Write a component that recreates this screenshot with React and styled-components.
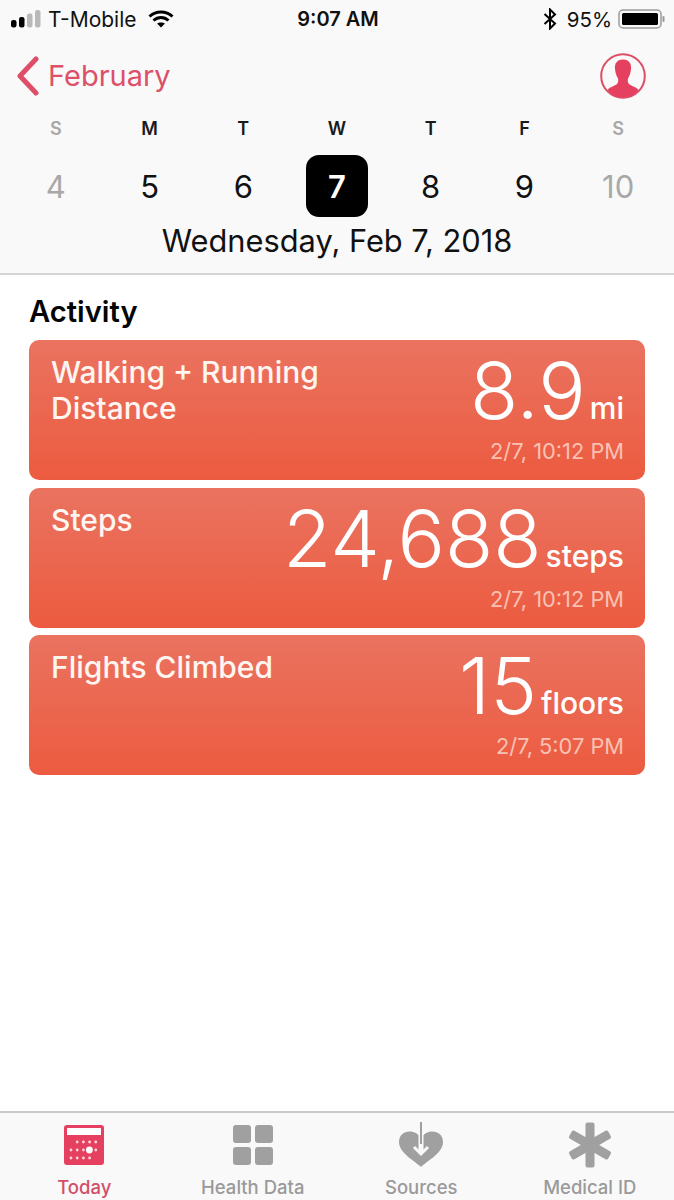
import React from "react";
import styled, { createGlobalStyle } from "styled-components";

const GlobalStyle = createGlobalStyle`
  html, body {
    margin: 0;
    padding: 0;
    background: #ffffff;
  }
  * {
    box-sizing: border-box;
  }
`;

const Phone = styled.div`
  width: 674px;
  height: 1200px;
  display: flex;
  flex-direction: column;
  overflow: hidden;
  background: #ffffff;
  font-family: Inter, "Liberation Sans", sans-serif;
`;

const Header = styled.header`
  height: 275px;
  flex-shrink: 0;
  background: #f9f9f9;
  border-bottom: 2px solid #d4d4d4;
`;

const StatusBar = styled.div`
  height: 38px;
  padding: 0 9px 0 11px;
  display: flex;
  align-items: center;
  font-size: 20px;
  color: #111111;
`;

const StatusSide = styled.div`
  flex: 1;
  display: flex;
  align-items: center;
  justify-content: ${(props) => (props.right ? "flex-end" : "flex-start")};
`;

const Carrier = styled.span`
  margin: 0 11px 0 7px;
  font-size: 21px;
  font-weight: 400;
`;

const Clock = styled.span`
  font-weight: 600;
`;

const Percent = styled.span`
  margin: 0 6px 0 10px;
  font-size: 20.5px;
`;

const NavRow = styled.div`
  height: 76px;
  padding: 0 28px 0 16px;
  display: flex;
  align-items: center;
  justify-content: space-between;
`;

const BackLink = styled.div`
  display: flex;
  align-items: center;
  gap: 8px;
  font-size: 29px;
  color: #dd5069;
`;

const BackLabel = styled.span`
  margin-top: -2px;
`;

const WeekGrid = styled.div`
  padding: 0 9px;
  display: grid;
  grid-template-columns: repeat(7, 1fr);
  justify-items: center;
`;

const DayLetter = styled.div`
  height: 27px;
  margin-top: 1px;
  font-size: 18px;
  font-weight: 600;
  line-height: 27px;
  color: ${(props) => (props.muted ? "#a8a8a8" : "#1a1a1a")};
`;

const DayNumber = styled.div`
  width: 62px;
  height: 62px;
  margin-top: 13px;
  display: flex;
  align-items: center;
  justify-content: center;
  border-radius: 13px;
  font-size: 31px;
  font-weight: ${(props) => (props.selected ? 600 : 400)};
  color: ${(props) =>
    props.selected ? "#ffffff" : props.muted ? "#a8a8a8" : "#111111"};
  background: ${(props) => (props.selected ? "#000000" : "transparent")};
`;

const DateLine = styled.div`
  margin-top: 4px;
  text-align: center;
  font-size: 30.8px;
  line-height: 40px;
  color: #111111;
`;

const Content = styled.main`
  flex: 1;
  padding: 19px 29px 0;
`;

const SectionTitle = styled.h2`
  margin: 0 0 10px;
  font-size: 29.2px;
  line-height: 36px;
  font-weight: 600;
  color: #050505;
`;

const CardList = styled.div`
  display: flex;
  flex-direction: column;
  gap: 7.5px;
`;

const Card = styled.div`
  height: 140px;
  padding: 14px 21px 15px 22px;
  display: flex;
  justify-content: space-between;
  border-radius: 10px;
  color: #ffffff;
  background: linear-gradient(180deg, #ea7360 0%, #ec5b40 100%);
`;

const CardTitle = styled.div`
  width: 290px;
  font-size: 30px;
  font-weight: 500;
  line-height: 36px;
  color: #fff5f1;
`;

const CardData = styled.div`
  display: flex;
  flex-direction: column;
  align-items: flex-end;
  margin-top: -2px;
`;

const ValueRow = styled.div`
  height: 84px;
  display: flex;
  align-items: baseline;
  gap: 4px;
`;

const Value = styled.span`
  font-size: 79px;
  font-weight: 300;
  line-height: 76px;
`;

const Unit = styled.span`
  font-size: 30px;
  font-weight: 500;
`;

const Stamp = styled.div`
  margin-top: 1px;
  font-size: 21.8px;
  line-height: 28px;
  color: #f9c1b3;
`;

const TabBar = styled.nav`
  height: 89px;
  flex-shrink: 0;
  display: grid;
  grid-template-columns: repeat(4, 1fr);
  background: #f9f9f9;
  border-top: 2px solid #c9c9c9;
`;

const Tab = styled.div`
  display: flex;
  flex-direction: column;
  align-items: center;
  padding-top: 10px;
  font-size: 18.5px;
  font-weight: 500;
  color: ${(props) => (props.active ? "#d24f69" : "#9a9a9a")};
`;

const TabIcon = styled.div`
  height: 44px;
  margin-bottom: 9px;
  display: flex;
  align-items: center;
  justify-content: center;
`;

const SignalIcon = () => (
  <svg width="30" height="20" viewBox="0 0 30 20">
    <rect x="0" y="11" width="5.5" height="7.5" rx="2.2" fill="#000" />
    <rect x="8" y="8" width="5.5" height="10.5" rx="2.2" fill="#000" />
    <rect x="16" y="4.500" width="5.5" height="14" rx="2.2" fill="#b9b9b9" />
    <rect x="24" y="1" width="5.5" height="17.500" rx="2.2" fill="#b9b9b9" />
  </svg>
);

const WifiIcon = () => (
  <svg width="26" height="20" viewBox="0 0 26 20" fill="none" stroke="#000" strokeWidth="3">
    <path d="M1.5 7.5C8 1.5 18 1.5 24.5 7.5" />
    <path d="M5.5 11.5C10 7.5 16 7.5 20.5 11.5" />
    <path d="M13 18.5L9 14.5C11 13 15 13 17 14.5Z" fill="#000" stroke="none" />
  </svg>
);

const BluetoothIcon = () => (
  <svg width="14" height="22" viewBox="0 0 14 22" fill="none" stroke="#000" strokeWidth="2">
    <path d="M1.5 6L12 15.5L7 20.5V1.5L12 6.5L1.5 16" />
  </svg>
);

const BatteryIcon = () => (
  <svg width="47" height="22" viewBox="0 0 47 22">
    <rect x="1" y="2" width="42" height="18" rx="4" fill="none" stroke="#9a9a9a" strokeWidth="1.5" />
    <rect x="4" y="5" width="36" height="12" rx="1.5" fill="#000" />
    <rect x="44.5" y="8" width="2" height="6" rx="1" fill="#9a9a9a" />
  </svg>
);

const BackChevron = () => (
  <svg width="24" height="40" viewBox="0 0 24 40" fill="none" stroke="#dd4f68" strokeWidth="5" strokeLinecap="round" strokeLinejoin="round">
    <path d="M20 3L4 20L20 37" />
  </svg>
);

const ProfileIcon = () => (
  <svg width="46" height="46" viewBox="0 0 46 46">
    <circle cx="23" cy="23" r="21.8" fill="none" stroke="#dd4f68" strokeWidth="2" />
    <path
      d="M23 6.500C16.500 6.500 14.500 11 15 16C15.300 20 16.500 23 18 25.500C18.600 27.500 18.300 29.500 17 31C15 33 9.500 34 7.500 37C11.500 42 17 44.500 23 44.500C29 44.500 34.500 42 38.500 37C36.500 34 31 33 29 31C27.700 29.500 27.400 27.500 28 25.500C29.500 23 30.700 20 31 16C31.500 11 29.500 6.500 23 6.500Z"
      fill="#e5405f"
    />
  </svg>
);

const TodayIcon = () => (
  <svg width="40" height="40" viewBox="0 0 40 40">
    <rect x="0" y="0" width="40" height="40" rx="3" fill="#e5405f" />
    <rect x="3" y="3" width="34" height="7" rx="0.5" fill="#ffffff" />
    {[0, 1, 2].map((row) =>
      [0, 1, 2, 3, 4].map((col) =>
        (row === 0 && col === 0) || (row === 2 && col === 4) ? null : (
          <circle key={`${row}-${col}`} cx={7 + col * 6.2} cy={17 + row * 8} r="1.4" fill="#ffd3da" />
        )
      )
    )}
    <circle cx="25.4" cy="25" r="3.4" fill="#ffffff" />
  </svg>
);

const HealthDataIcon = () => (
  <svg width="40" height="40" viewBox="0 0 40 40" fill="#a0a0a0">
    <rect x="0" y="0" width="18" height="18" rx="3" />
    <rect x="22" y="0" width="18" height="18" rx="3" />
    <rect x="0" y="22" width="18" height="18" rx="3" />
    <rect x="22" y="22" width="18" height="18" rx="3" />
  </svg>
);

const SourcesIcon = () => (
  <svg width="46" height="46" viewBox="0 0 46 46">
    <path
      d="M23 45C17 39 1 31 1 20C1 13 6 9.500 11.500 9.500C16.500 9.500 20.500 12 23 16C25.500 12 29.500 9.500 34.500 9.500C40 9.500 45 13 45 20C45 31 29 39 23 45Z"
      fill="#a0a0a0"
    />
    <path d="M23 0V31" stroke="#f9f9f9" strokeWidth="5" />
    <path d="M23 0V22" stroke="#a0a0a0" strokeWidth="2" />
    <path d="M16 25L23 32L30 25" fill="none" stroke="#f9f9f9" strokeWidth="3" />
  </svg>
);

const MedicalIcon = () => (
  <svg width="44" height="46" viewBox="0 0 44 46" fill="#a0a0a0">
    <rect x="17.500" y="0.500" width="9" height="45" rx="2" />
    <rect x="17.500" y="0.500" width="9" height="45" rx="2" transform="rotate(60 22 23)" />
    <rect x="17.500" y="0.500" width="9" height="45" rx="2" transform="rotate(-60 22 23)" />
  </svg>
);

const weekDays = [
  { letter: "S", day: 4, muted: true },
  { letter: "M", day: 5 },
  { letter: "T", day: 6 },
  { letter: "W", day: 7, selected: true },
  { letter: "T", day: 8 },
  { letter: "F", day: 9 },
  { letter: "S", day: 10, muted: true },
];

const activity = [
  {
    title: ["Walking + Running", "Distance"],
    value: "8.9",
    unit: "mi",
    stamp: "2/7, 10:12 PM",
  },
  { title: ["Steps"], value: "24,688", unit: "steps", stamp: "2/7, 10:12 PM" },
  {
    title: ["Flights Climbed"],
    value: "15",
    unit: "floors",
    stamp: "2/7, 5:07 PM",
  },
];

const tabs = [
  { label: "Today", icon: <TodayIcon />, active: true },
  { label: "Health Data", icon: <HealthDataIcon /> },
  { label: "Sources", icon: <SourcesIcon /> },
  { label: "Medical ID", icon: <MedicalIcon /> },
];

const App = () => {
  return (
    <Phone>
      <GlobalStyle />
      <Header>
        <StatusBar>
          <StatusSide>
            <SignalIcon />
            <Carrier>T-Mobile</Carrier>
            <WifiIcon />
          </StatusSide>
          <Clock>9:07 AM</Clock>
          <StatusSide right>
            <BluetoothIcon />
            <Percent>95%</Percent>
            <BatteryIcon />
          </StatusSide>
        </StatusBar>
        <NavRow>
          <BackLink>
            <BackChevron />
            <BackLabel>February</BackLabel>
          </BackLink>
          <ProfileIcon />
        </NavRow>
        <WeekGrid>
          {weekDays.map((item) => (
            <DayLetter key={item.day} muted={item.muted}>
              {item.letter}
            </DayLetter>
          ))}
          {weekDays.map((item) => (
            <DayNumber key={item.day} muted={item.muted} selected={item.selected}>
              {item.day}
            </DayNumber>
          ))}
        </WeekGrid>
        <DateLine>Wednesday, Feb 7, 2018</DateLine>
      </Header>
      <Content>
        <SectionTitle>Activity</SectionTitle>
        <CardList>
          {activity.map((item) => (
            <Card key={item.unit}>
              <CardTitle>
                {item.title.map((line) => (
                  <div key={line}>{line}</div>
                ))}
              </CardTitle>
              <CardData>
                <ValueRow>
                  <Value>{item.value}</Value>
                  <Unit>{item.unit}</Unit>
                </ValueRow>
                <Stamp>{item.stamp}</Stamp>
              </CardData>
            </Card>
          ))}
        </CardList>
      </Content>
      <TabBar>
        {tabs.map((tab) => (
          <Tab key={tab.label} active={tab.active}>
            <TabIcon>{tab.icon}</TabIcon>
            {tab.label}
          </Tab>
        ))}
      </TabBar>
    </Phone>
  );
};

export default App;
